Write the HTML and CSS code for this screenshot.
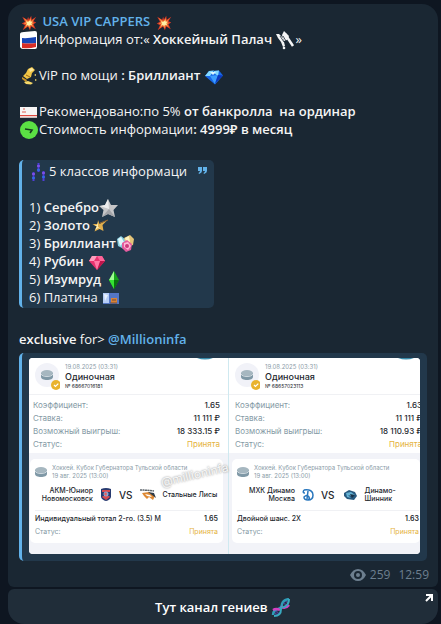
FILE: index.html
```html
<!DOCTYPE html>
<html lang="ru">
<head>
<meta charset="utf-8">
<meta name="viewport" content="width=device-width, initial-scale=1">
<title>USA VIP CAPPERS</title>
<link rel="stylesheet" href="styles.css">
</head>
<body>
<svg class="defs" aria-hidden="true">
  <symbol id="boom" viewBox="0 0 20 20">
    <path fill="#d93a26" d="M10 6 12.500 2 13 6.500 18 3 15 8 18 9.500 15 11.500 17.500 17 12.500 14 11 18 9 14 3 18 5.500 12.500 2 10.500 5.500 8.500 2.500 3 8 6.500 9 3Z"/>
    <path fill="#f6903d" d="M10 7.500 12 4.500 12.500 8 16 5 13.500 9 15.500 10 13.500 11.500 15.500 15 12 12.500 10.500 16 9 12.500 5 16 7 11.500 4 10.500 7 9 4 4.500 8.500 7.500Z"/>
    <path fill="#fff0a8" d="M10 8 11.500 7 12 9 14 8 12.500 10.500 13.500 12.500 11 12 10 14 9 12 6.500 13 8 10.500 6.500 8 9 9Z"/>
  </symbol>
  <symbol id="puck" viewBox="0 0 12 12">
    <path fill="#7f98a6" d="M0 4v4c0 1.700 2.700 3 6 3s6-1.300 6-3V4Z"/>
    <ellipse cx="6" cy="4" rx="6" ry="3" fill="#a6b7c0"/>
    <path fill="none" stroke="#e4eaed" stroke-width=".8" d="M0 5c.5 1.600 3 2.500 6 2.500S11.500 6.600 12 5"/>
  </symbol>
  <symbol id="sport" viewBox="0 0 26 28">
    <circle cx="13" cy="12" r="12" fill="#f1f2f8"/>
    <use href="#puck" x="7" y="6" width="12" height="12"/>
    <circle cx="22" cy="22" r="5" fill="#e9b32f"/>
    <path fill="none" stroke="#fff" stroke-width="1.200" d="m20 22 1.500 1.500 2.800-2.800"/>
  </symbol>
</svg>

<main class="chat">
  <article class="bubble">
    <p class="line title"><svg class="emoji"><use href="#boom"/></svg> <a href="#">USA VIP CAPPERS</a> <svg class="emoji"><use href="#boom"/></svg></p>
    <p class="line"><svg class="emoji" viewBox="0 0 20 20"><path fill="#fff" d="M1 3Q1 1 5 1l11-1q2 0 2 2v14q0 2-2 2H4q-2 0-3-2Z"/><path fill="#1745b5" d="M3 7Q9 7.500 17 6v6Q10 13 3 12Z"/><path fill="#d92c25" d="M3 12q7 1 14 0v4Q10 18 3 17Z"/></svg>Информация от:« <b>Хоккейный Палач</b> <svg class="emoji" viewBox="0 0 20 20"><path fill="#f4f5f6" d="M0 3h3l4 4 2 8-2 1-2-5-3-4Z"/><path fill="#f4f5f6" d="m6 4 2-4 5 5-2 4-3 1Z"/><path stroke="#f4f5f6" stroke-width="2.500" d="m9 3 8 12"/><path stroke="#1a2733" stroke-width=".8" d="m4 5 4 6M7 5l3 5"/><circle cx="8" cy="17" r="1.300" fill="#f4f5f6"/></svg>»</p>
    <p class="line"><br></p>
    <p class="line"><svg class="emoji" viewBox="0 0 20 20"><path fill="#f1c545" d="m9 2 4-2 3 3-3 3-1 4-4 2-4-3 3-3Z"/><path fill="#ffe89b" d="m10 2 3-1 2 2-4 2Z"/><path stroke="#9b681c" d="m7 8 4 2"/><path fill="#cc9526" d="m3 10 5 3-1 2-4-3Z"/><path fill="#f6d869" d="m5 15 4-1 5 2-2 1.500-5-.5Zm10-7 2-1v2Zm1 4 2 1-2 1Z"/></svg>ViP по мощи <b>: Бриллиант</b> <svg class="emoji" viewBox="0 0 20 20"><path fill="#1767e8" d="m5 4 10-.5 4 5-8 9L1 9Z"/><path fill="#83d8ff" d="m5 4 5-.5L6 9H1Zm5 0 5-.5L14 9l-4-3Z"/><path fill="#3b9dff" d="m6 9 8-1-3 9Z"/><path fill="#d9f6ff" d="m6 5 6 0-3 3Z"/><path fill="#0c37bc" d="m14 8 5 .5-8 8Z"/></svg></p>
    <p class="line"><br></p>
    <p class="line"><svg class="emoji" viewBox="0 0 20 20"><path fill="#f7f5f5" d="M1 4h17v11H1Z"/><path fill="#e0493f" d="M1 12h17v1.200H1Z"/><path fill="#eaaaa5" d="M4 5h2v2H4Zm-1 3h4v2H3Z"/><path fill="#c9bcbc" d="M1 14h17v1H1Z"/></svg>Рекомендовано:по 5% <b>от банкролла&nbsp; на ординар</b></p>
    <p class="line"><svg class="emoji" viewBox="0 0 20 20"><circle cx="10" cy="9" r="9" fill="#5be044"/><path fill="none" stroke="#183b20" stroke-width="1.600" d="m6 8 7 1-2 3"/></svg>Стоимость информации<b>: 4999₽ в месяц</b></p>
    <p class="line"><br></p>

    <blockquote class="quote classes">
      <svg class="quote-mark" viewBox="0 0 11 9" aria-hidden="true"><path fill="#62b2ea" d="M1 1h4v4Q5 7 2 8L1.500 7Q3 6 3 5H1Zm5 0h4v4q0 2-3 3l-.5-1Q8 6 8 5H6Z"/></svg>
      <p class="line"><svg class="emoji" viewBox="0 0 20 20"><path stroke="#4f3fd9" stroke-width="2" d="M9.500 0v9M4.500 9v9M14.500 8v10"/><path stroke="#8b54ef" stroke-width="1.500" d="M8 3h3M3 11h3M13 10h3"/><path stroke="#2d73ee" stroke-width="1.500" d="M8 7h3M3 15h3M13 14h3"/></svg>5 классов информаци</p>
      <p class="line"><br></p>
      <p class="line">1) <b>Серебро</b><svg class="emoji" viewBox="0 0 20 20"><path fill="#c6c6c8" d="m9 0 3 6 7 0-4.500 5 1.500 7-7-3-6 3 1.500-7L0 7l6-1Z"/><path fill="#ededee" d="m9 0 1 10L1 7l5-1Z"/><path fill="#a3a4a8" d="m10 10 6 8-7-3-6 3Z"/></svg></p>
      <p class="line">2) <b>Золото</b><svg class="emoji" viewBox="0 0 20 20"><path fill="#e2af4c" d="m8 3 1.500 4 8-4-5 5 1 6-4-2-5 2.500 2-5-4-2.500h5Z"/><path fill="#fff0b0" d="m8 5 0 5 3 2-3-1-3 2 2-4-3-1h3Z"/><path stroke="#916632" d="m10 6 8-3"/></svg></p>
      <p class="line">3) <b>Бриллиант</b><svg class="emoji" viewBox="0 0 20 20"><path fill="#87cddf" d="m1 4 4-3 5 4-2 9-6-3Z"/><path fill="#dff7fc" d="m2 4 3-2 3 5-4 4Z"/><path fill="#e4c478" d="m8 3 6-3 4 4-1 6-6 2Z"/><path fill="#fff3bf" d="m9 3 4-2 1 6-3 2Z"/><path fill="#e45c9f" d="m6 8 5-3 5 4-1 6-5 2-4-4Z"/><path fill="#ffb7d5" d="m8 8 4-1 3 4-3 4-4-3Z"/><circle cx="11" cy="11" r="2" fill="#cc3c7c"/></svg></p>
      <p class="line">4) <b>Рубин</b> <svg class="emoji" viewBox="0 0 20 20"><path fill="#e8326f" d="m5 3 10 0 3 5-8 9L2 8Z"/><path fill="#ff9dbd" d="m5 3 5 0-3 5H2Z"/><path fill="#ff6498" d="m10 3 5 0 3 5h-5Z"/><path fill="#bd164b" d="m13 8 5 0-8 9Z"/><path fill="#ff78a6" d="m7 8 6 0-3 9Z"/></svg></p>
      <p class="line">5) <b>Изумруд</b> <svg class="emoji" viewBox="0 0 20 20"><path fill="#16a51c" d="m10 0 5 9-5 9-5-9Z"/><path fill="#9dff91" d="m10 0 0 9-5 0Z"/><path fill="#35e333" d="m5 9 5 0 0 9Z"/><path fill="#08730d" d="m10 9 5 0-5 9Z"/></svg></p>
      <p class="line">6) Платина <svg class="emoji" viewBox="0 0 20 20"><path fill="#5476c4" d="M2 4h16v11H2Z"/><path fill="#b5cdf7" d="M2 4h6v10H2Z"/><path fill="#e9f2ff" d="m3 5 4 1-3 6Z"/><path fill="#d98437" d="M10 9h6v5h-6Z"/><path stroke="#724c38" d="M11 11h4M9 14h7"/></svg></p>
    </blockquote>

    <p class="line"><br></p>
    <p class="line"><b>exclusive</b> for&gt; <a class="mention" href="#">@Millioninfa</a></p>

    <blockquote class="quote media">
      <div class="photo">
        <section class="ticket">
          <header class="ticket-head">
            <svg class="sport"><use href="#sport"/></svg>
            <div><p class="date">19.08.2025 (03:31)</p><h2>Одиночная</h2><p class="number">№ 68667016181</p></div>
            <svg class="chip" viewBox="0 0 16 2"><path fill="#388aa9" d="M0 0h16Q8 3 0 0Z"/></svg>
          </header>
          <dl class="facts">
            <div><dt>Коэффициент:</dt><dd>1.65</dd></div>
            <div><dt>Ставка:</dt><dd>11 111 ₽</dd></div>
            <div><dt>Возможный выигрыш:</dt><dd>18 333.15 ₽</dd></div>
            <div><dt>Статус:</dt><dd class="accepted">Принята</dd></div>
          </dl>
          <div class="event">
            <div class="league"><svg class="puck"><use href="#puck"/></svg><p>Хоккей. Кубок Губернатора Тульской области<br>19 авг. 2025 (13:00)</p></div>
            <div class="match">
              <p class="home">АКМ-Юниор<br>Новомосковск</p>
              <svg class="logo" viewBox="0 0 12 14"><path fill="#283b70" d="M1 1q5-2 10 0v8q-1 3-5 4-4-1-5-4Z"/><path fill="#d84b50" d="M2 2h8v2H2Zm0 7 4 3 4-3-1-1H3Z"/><circle cx="6" cy="6" r="2.500" fill="#8ba9d4"/><path fill="#e75f5f" d="m6 4 1 2-1 2-2-2Z"/></svg>
              <span class="vs">VS</span>
              <svg class="logo wide" viewBox="0 0 16 14"><path stroke="#5e666d" stroke-width="1.500" stroke-dasharray="2 .5" d="M0 2q7 0 14 1"/><path fill="#de8934" d="m2 5 7-1 6 4-2 4-4-3-2 2-3-3Z"/><path fill="#303b46" d="m8 4 6 1 2 5-4-3Z"/><path fill="#fff" d="m5 6 5 1 2 2-5-1Z"/></svg>
              <p>Стальные Лисы</p>
            </div>
            <div class="bet"><p>Индивидуальный тотал 2-го. (3.5) М</p><b>1.65</b></div>
            <div class="status"><span>Статус:</span><span class="accepted">Принята</span></div>
          </div>
        </section>
        <section class="ticket second">
          <header class="ticket-head">
            <svg class="sport"><use href="#sport"/></svg>
            <div><p class="date">19.08.2025 (03:31)</p><h2>Одиночная</h2><p class="number">№ 68657023113</p></div>
            <svg class="chip" viewBox="0 0 16 2"><path fill="#388aa9" d="M0 0h16Q8 3 0 0Z"/></svg>
          </header>
          <dl class="facts">
            <div><dt>Коэффициент:</dt><dd>1.63</dd></div>
            <div><dt>Ставка:</dt><dd>11 111 ₽</dd></div>
            <div><dt>Возможный выигрыш:</dt><dd>18 110.93 ₽</dd></div>
            <div><dt>Статус:</dt><dd class="accepted">Принята</dd></div>
          </dl>
          <div class="event">
            <div class="league"><svg class="puck"><use href="#puck"/></svg><p>Хоккей. Кубок Губернатора Тульской области<br>19 авг. 2025 (13:00)</p></div>
            <div class="match">
              <p class="home">МХК Динамо<br>Москва</p>
              <svg class="logo" viewBox="0 0 12 14"><path fill="none" stroke="#2876bd" stroke-width="1.500" d="M2 2q9-1 9 5 0 5-5 5-4 0-4-3 3-3 5 0 1 2-1 3M6 3 5 11M2 2Q0 5 3 5"/></svg>
              <span class="vs">VS</span>
              <svg class="logo wide" viewBox="0 0 16 14"><path fill="#285a80" d="m2 5 5-3 6 2 2 4-3 4-7-1-3-3Z"/><path fill="#64b2d4" d="m4 5 5-1 4 3-3 1-4-1 3 3-4-1Z"/><path fill="#193348" d="m8 6 5 1-3 3Z"/></svg>
              <p>Динамо-<br>Шинник</p>
            </div>
            <div class="bet"><p>Двойной шанс. 2X</p><b>1.63</b></div>
            <div class="status"><span>Статус:</span><span class="accepted">Принята</span></div>
          </div>
        </section>
        <span class="watermark">@millioninfa</span>
      </div>
    </blockquote>

    <footer class="meta">
      <svg class="eye" viewBox="0 0 16 12" role="img" aria-label="Просмотры"><path fill="#6d7f8f" fill-rule="evenodd" d="M8 0Q13 0 16 6q-3 6-8 6T0 6q3-6 8-6Zm0 2a4 4 0 1 0 0 8 4 4 0 0 0 0-8Zm0 2a2 2 0 1 1 0 4 2 2 0 0 1 0-4Z"/></svg>
      <span>259</span><time>12:59</time>
    </footer>
  </article>

  <button class="link-button" type="button">Тут канал гениев <svg class="emoji" viewBox="0 0 20 20"><path stroke="#4a3a91" stroke-width="1.500" d="m4 12 4 4M12 4l4 4M3 14l3 3M14 2l3 3"/><path fill="none" stroke="#2f9cb8" stroke-width="2.500" d="M2 17q0-5 5-6 4-1 4-5 1-4 7-5"/><path fill="none" stroke="#d33fc2" stroke-width="2.500" d="M2 12q3-2 7 0M10 9q5 2 8-2"/><path fill="none" stroke="#38a9bf" stroke-width="2" d="M3 18q7 0 7-7 0-2 3-2 5-2 5-8"/></svg><svg class="open" viewBox="0 0 8 8" aria-hidden="true"><path fill="none" stroke="#fff" stroke-width="2" d="M1 1h6v6M7 1 1 7"/></svg></button>
</main>
</body>
</html>
```
FILE: styles.css
```css
* {
  box-sizing: border-box;
}

body {
  margin: 0;
  background: #0e1621;
  color: #f5f5f5;
  font: 13px/18px "Open Sans", "Noto Sans", sans-serif;
}

p, h2, dl, dd, blockquote {
  margin: 0;
}

a {
  color: #62b2ea;
  text-decoration: none;
}

b {
  font-weight: 600;
}

.defs {
  display: none;
}

.chat {
  display: flex;
  flex-direction: column;
  gap: 2px;
  padding: 4px 3px 0 8px;
}

.bubble {
  padding: 8px 11px 3px;
  border-radius: 16px 16px 6px 6px;
  background: #1a2733;
}

.line {
  min-height: 18px;
  white-space: nowrap;
}

.emoji {
  width: 20px;
  height: 20px;
  margin: -4px 0;
  vertical-align: middle;
}

.title .emoji {
  padding: 1px;
}

.title a {
  font-weight: 600;
}

.quote {
  position: relative;
  border-left: 3px solid #62b2ea;
  border-radius: 5px;
  background: #22384b;
}

.classes {
  width: fit-content;
  margin: 4px 0;
  padding: 2px 27px 2px 7px;
}

.quote-mark {
  position: absolute;
  top: 6px;
  right: 6px;
  width: 11px;
  height: 9px;
}

.mention {
  font-weight: 600;
}

.media {
  margin-top: 5px;
  padding: 5px 7px 7px;
}

.photo {
  position: relative;
  display: grid;
  grid-template-columns: 199fr 192fr;
  overflow: hidden;
  border-radius: 4px;
  background: #fff;
  color: #24282e;
  font: 8px/13px Inter, "Liberation Sans", sans-serif;
  white-space: nowrap;
}

.ticket {
  min-width: 0;
  background: #f2f3f8;
}

.second {
  border-left: 1px solid #cfe9f0;
}

.ticket-head {
  position: relative;
  display: flex;
  gap: 5px;
  height: 37px;
  padding: 5px 5px 0;
  border-bottom: 1px solid #f0f1f4;
  background: #fff;
}

.chip {
  position: absolute;
  top: 0;
  right: 15px;
  width: 16px;
  height: 2px;
}

.second .chip {
  right: 6px;
}

.sport {
  width: 26px;
  height: 28px;
}

.date {
  color: #8b9ca8;
  font-size: 6px;
  line-height: 8px;
}

.ticket h2 {
  font-size: 9px;
  font-weight: 500;
  line-height: 11px;
}

.number {
  font-size: 5px;
  line-height: 8px;
}

.facts {
  padding: 4px 8px 2px 4px;
  background: #fff;
}

.facts div, .bet, .status {
  display: flex;
  justify-content: space-between;
}

.facts dt, .status {
  color: #849aa5;
}

.facts dd {
  font-weight: 500;
}

.facts .accepted, .accepted {
  color: #e5b340;
  font-weight: 400;
}

.second .facts {
  margin-right: -2px;
  padding-right: 0;
  padding-left: 6px;
}

.event {
  margin: 6px 5px 11px 1px;
  padding: 5px;
  border-radius: 5px;
  background: #fff;
}

.second .event {
  margin-right: 0;
  margin-left: 3px;
  padding-right: 1px;
}

.league {
  display: flex;
  align-items: center;
  gap: 5px;
  color: #8b9ca8;
  font-size: 6px;
  line-height: 8px;
}

.puck {
  width: 12px;
  height: 12px;
}

.match {
  display: flex;
  align-items: center;
  gap: 7px;
  height: 30px;
  font-size: 7px;
  font-weight: 500;
  line-height: 8px;
}

.home {
  width: 58px;
  text-align: right;
}

.logo {
  width: 12px;
  height: 14px;
}

.wide {
  width: 16px;
}

.vs {
  font-size: 10px;
}

.bet {
  padding-top: 1px;
  border-top: 1px solid #f0f1f4;
  font-size: 7px;
  font-weight: 500;
}

.status {
  font-size: 7px;
}

.watermark {
  position: absolute;
  top: 110px;
  left: 131px;
  color: #f8f8f8;
  font-size: 12px;
  text-shadow: 0 0 2px #777;
  transform: rotate(-13deg);
}

.meta {
  display: flex;
  align-items: center;
  justify-content: flex-end;
  gap: 8px;
  margin-right: -2px;
  padding-top: 5px;
  color: #6d7f8f;
  font-size: 12px;
}

.eye {
  width: 16px;
  height: 12px;
  margin-right: -4px;
}

.link-button {
  position: relative;
  height: 35px;
  border: 0;
  border-radius: 6px 6px 16px 16px;
  background: #202d39;
  color: #fff;
  font: 600 13px/18px "Open Sans", "Noto Sans", sans-serif;
}

.open {
  position: absolute;
  top: 5px;
  right: 5px;
  width: 8px;
  height: 8px;
}
```
